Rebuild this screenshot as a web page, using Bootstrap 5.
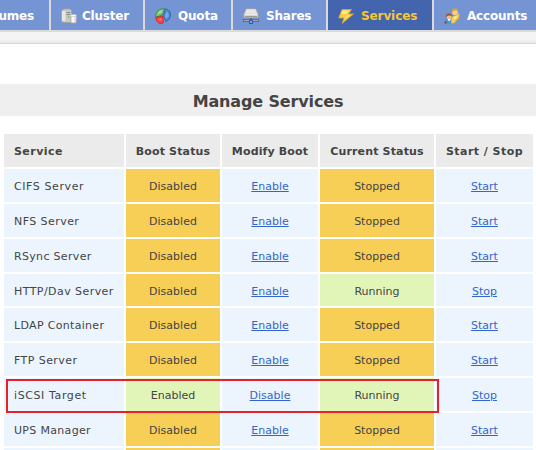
<!DOCTYPE html>
<html lang="en">
<head>
<meta charset="utf-8">
<title>Manage Services</title>
<link href="https://cdn.jsdelivr.net/npm/bootstrap@5.3.0/dist/css/bootstrap.min.css" rel="stylesheet">
<style>
body{font-family:Verdana,"DejaVu Sans",sans-serif;font-size:11px;line-height:14px;color:#444;background:#fff;overflow:hidden;height:450px}
.topbar{height:32px;background:#dadada;gap:2px;border-bottom:2px solid #dadada}
.tab{height:30px;background:#7594d3;color:#fff;font-size:12px;font-weight:bold;flex:none;padding-top:2px;white-space:nowrap;text-decoration:none;letter-spacing:-.2px}
.tab.current{background:#4265ae;color:#f5c638;letter-spacing:-.1px}
.tab svg{width:16px;height:16px;flex:none;margin-right:5px}
.t0{width:49px;justify-content:flex-end;padding-right:15px}
.t1{width:92px;padding-left:10px}.t2{width:86px;padding-left:10px}.t3{width:93px;padding-left:10px}.t4{width:104px;padding-left:10px}.t5{width:102px;padding-left:10px}
.t2 svg,.t3 svg,.t4 svg,.t5 svg{margin-right:7px}
.strip{height:12px;background:linear-gradient(#f4f4f4 60%,#ebebeb);border-bottom:1px solid #d6d6d6}
.heading{margin-top:40px;height:32px;background:#efefef;font-size:16px;line-height:35px;font-weight:bold;text-align:center;color:#444;letter-spacing:-.14px}
.services{width:529px;height:316px;margin:18px 0 0 4px;display:grid;grid-template-columns:120px 94px 96px 114px 97px;grid-template-rows:33px 33px 33px 33px 32px 33px 33px 33px 33px 2px;gap:2px}
.services>div{display:flex;align-items:center;justify-content:center;background:#ecf5fd;white-space:nowrap;padding-top:2px}
.services>div:nth-child(n+21):nth-child(-n+25){padding-top:3px}
.services>.name{justify-content:flex-start;padding-left:10px;letter-spacing:.32px}
.services>.name.wide{letter-spacing:.6px}
.services>.name.mid{letter-spacing:.44px}
.services>.head{background:#ebebeb;font-weight:bold;letter-spacing:.15px}
.services>.head.name,.services>.head.wide{letter-spacing:.45px}
.services>.off{background:#f7cf57}
.services>.on{background:#e1f5b9}
.services>.last{height:2px;padding:0}
.services a{color:#3366cc;text-decoration:underline;text-underline-offset:1px}
.marker{position:absolute;left:6px;top:379px;width:433px;height:34px;border:2px solid #e9202a}
</style>
<script src="https://cdn.jsdelivr.net/npm/bootstrap@5.3.0/dist/js/bootstrap.bundle.min.js"></script>
</head>
<body class="m-0 position-relative">
<nav class="topbar d-flex">
<a class="tab t0 d-flex align-items-center">umes</a>
<a class="tab t1 d-flex align-items-center"><svg viewBox="0 0 16 16"><path d="M.5 3 2.500 1H9l1.500 1.500v11L9 14.500H2L.5 13z" fill="#c9c9c4" stroke="#a2a29d" stroke-width=".7"/><path d="M1 3h3.500v10H1z" fill="#e6e6e3"/><path d="M5.500 4.500H9M5.500 6.500H9" stroke="#888"/><path d="M7 8.500h1.200v1.200H7z" fill="#3dbb35"/><path d="M9.500 7.500h6l-.5 7.500h-5z" fill="#e6e6e4" stroke="#aaa" stroke-width=".7"/><ellipse cx="12.500" cy="7.500" rx="3" ry="1" fill="#fff" stroke="#bbb" stroke-width=".5"/><path d="M12 9v5" stroke="#fff" stroke-width="1.500"/></svg>Cluster</a>
<a class="tab t2 d-flex align-items-center"><svg viewBox="0 0 16 16"><path d="M.5 9C.5 4 4 .7 9.500.7L8.500 5 5 8z" fill="#78c673" stroke="#31903a" stroke-width=".9"/><path d="M2.500 6C3.500 3.500 5 2.500 7.500 2L6 5z" fill="#a9dea5"/><path d="M10.500 1c3 0 5 3 5 6 0 3-2 5.500-4.500 6.500L8.500 8z" fill="#5289d2" stroke="#2e60b0" stroke-width=".9"/><path d="M11.500 3.500c2 1 2.500 3 2 5L11 11 9.800 8z" fill="#7aa9e6"/><path d="M.8 9.500 7.500 8l1 6.500C6 16.500 1.500 15.500.8 9.500z" fill="#f44a43" stroke="#cb2729" stroke-width=".9"/><path d="m3 11.500 3-1 1 2z" fill="#ff8c84"/></svg>Quota</a>
<a class="tab t3 d-flex align-items-center"><svg viewBox="0 0 16 16"><path d="M3 .8h10l2.300 5v4H.7v-4z" fill="#d6d6d4" stroke="#969694" stroke-width=".8"/><path d="M3.500 2h9M3 4h10M2 6.200h12" stroke="#f7f7f7"/><path d="M2 8.500h12" stroke="#999"/><path d="M0 12.500h16" stroke="#6c6c6c" stroke-width="3"/><path d="M1 12.500h14" stroke="#aaa"/><path d="M8 10v2" stroke="#666" stroke-width="2"/><path d="M6.500 12.500h3v3h-3z" fill="#6fa9f5" stroke="#2159b5"/></svg>Shares</a>
<a class="tab t4 current d-flex align-items-center"><svg viewBox="0 0 16 16"><path d="M4 1.500h9.500L10.500 6h5L4 15.500 6 10H.7z" fill="#f8ce45" stroke="#dca52b" stroke-width=".8"/><path d="M5 2.500h6L8.500 6H3z" fill="#ffe78e"/><path d="m8 7 4 .3L7 11l1-2z" fill="#ffe27a"/></svg>Services</a>
<a class="tab t5 d-flex align-items-center"><svg viewBox="0 0 16 16"><path d="M6 14.500 8 8.500l5-2 2.700-1.500L15 10l-5 5.500H7z" fill="#f1cf57" stroke="#cc9635" stroke-width=".7"/><path d="m9 10 2 1.500L14 7" fill="#fff1a1"/><circle cx="11" cy="4" r="3" fill="#ffce9a"/><path d="M8 5V1.500L10 .5h3l1.500 4-2-2-3 .5z" fill="#e1a033"/><path d="M1 15.500V12l2-2 4 1 .5 4.500z" fill="#4a93d5"/><path d="m3.500 11 1.500 2.500L7 11" fill="#fff"/><circle cx="5" cy="8.500" r="2.600" fill="#f5bc91"/><path d="M1.800 9.500 2 6.500 5 5l3 1.500v2L6 7.500 3.500 8z" fill="#a65c2d"/><path d="M.5 14.500h2" stroke="#8b451e" stroke-width="2"/></svg>Accounts</a>
</nav>
<div class="strip"></div>
<h1 class="heading mb-0">Manage Services</h1>
<main class="services">
<div class="head name">Service</div><div class="head">Boot Status</div><div class="head">Modify Boot</div><div class="head">Current Status</div><div class="head wide">Start / Stop</div>
<div class="name wide">CIFS Server</div><div class="off">Disabled</div><div><a href="#">Enable</a></div><div class="off">Stopped</div><div><a href="#">Start</a></div>
<div class="name mid">NFS Server</div><div class="off">Disabled</div><div><a href="#">Enable</a></div><div class="off">Stopped</div><div><a href="#">Start</a></div>
<div class="name">RSync Server</div><div class="off">Disabled</div><div><a href="#">Enable</a></div><div class="off">Stopped</div><div><a href="#">Start</a></div>
<div class="name mid">HTTP/Dav Server</div><div class="off">Disabled</div><div><a href="#">Enable</a></div><div class="on">Running</div><div><a href="#">Stop</a></div>
<div class="name">LDAP Container</div><div class="off">Disabled</div><div><a href="#">Enable</a></div><div class="off">Stopped</div><div><a href="#">Start</a></div>
<div class="name mid">FTP Server</div><div class="off">Disabled</div><div><a href="#">Enable</a></div><div class="off">Stopped</div><div><a href="#">Start</a></div>
<div class="name wide">iSCSI Target</div><div class="on">Enabled</div><div><a href="#">Disable</a></div><div class="on">Running</div><div><a href="#">Stop</a></div>
<div class="name">UPS Manager</div><div class="off">Disabled</div><div><a href="#">Enable</a></div><div class="off">Stopped</div><div><a href="#">Start</a></div>
<div class="last"></div><div class="off last"></div><div class="last"></div><div class="off last"></div><div class="last"></div>
</main>
<div class="marker"></div>
</body>
</html>
